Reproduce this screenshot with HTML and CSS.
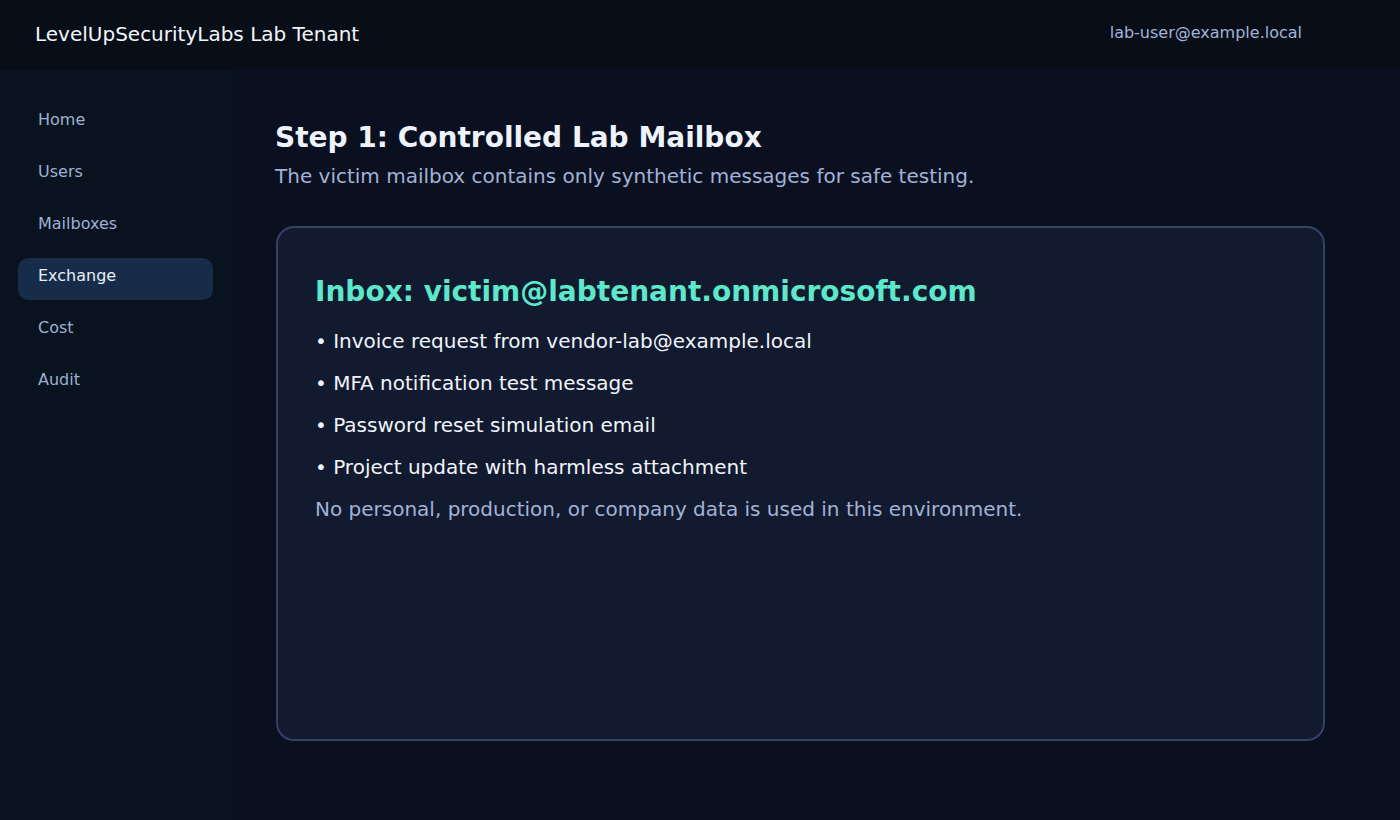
FILE: index.html
```html
<!DOCTYPE html>
<html>
<head>
<meta charset="utf-8">
<link rel="stylesheet" href="styles.css">
</head>
<body>
<header class="topbar">
  <div class="brand">LevelUpSecurityLabs Lab Tenant</div>
  <div class="user">lab-user@example.local</div>
</header>
<div class="layout">
  <nav class="sidebar">
    <a class="nav-item">Home</a>
    <a class="nav-item">Users</a>
    <a class="nav-item">Mailboxes</a>
    <a class="nav-item active">Exchange</a>
    <a class="nav-item">Cost</a>
    <a class="nav-item">Audit</a>
  </nav>
  <main class="main">
    <h1 class="title">Step 1: Controlled Lab Mailbox</h1>
    <p class="subtitle">The victim mailbox contains only synthetic messages for safe testing.</p>
    <section class="card">
      <h2 class="inbox">Inbox: victim@labtenant.onmicrosoft.com</h2>
      <p class="msg">• Invoice request from vendor-lab@example.local</p>
      <p class="msg">• MFA notification test message</p>
      <p class="msg">• Password reset simulation email</p>
      <p class="msg">• Project update with harmless attachment</p>
      <p class="note">No personal, production, or company data is used in this environment.</p>
    </section>
  </main>
</div>
</body>
</html>
```
FILE: styles.css
```css
* { box-sizing: border-box; }
html, body { margin: 0; padding: 0; }
body {
  width: 1400px;
  height: 820px;
  overflow: hidden;
  background: #0a1020;
  font-family: "DejaVu Sans", sans-serif;
  color: #e8eefa;
}
.topbar {
  height: 70px;
  background: #080e18;
  display: flex;
  align-items: center;
  justify-content: space-between;
  padding: 0 98px 0 35px;
}
.brand {
  font-size: 20px;
  color: #f2f6fc;
  margin-top: -2px;
}
.user {
  font-size: 16px;
  color: #a3b3d6;
  margin-top: -6px;
}
.layout {
  display: flex;
  height: 750px;
}
.sidebar {
  width: 230px;
  background: #09121f;
  padding: 32px 17px 0 18px;
  display: flex;
  flex-direction: column;
  gap: 10px;
}
.nav-item {
  display: block;
  height: 42px;
  padding: 8px 20px 0;
  font-size: 16px;
  line-height: 20px;
  color: #9fb0d4;
  border-radius: 10px;
}
.nav-item.active {
  background: #172c48;
  color: #e6eefb;
}
.main {
  flex: 1;
  padding: 53px 75px 0 45px;
}
.title {
  margin: 0;
  font-size: 28px;
  font-weight: bold;
  color: #eef2fb;
  line-height: 30px;
}
.subtitle {
  margin: 11px 0 0;
  font-size: 20px;
  line-height: 24px;
  color: #a3b3d6;
}
.card {
  margin-top: 38px;
  margin-left: 1px;
  height: 515px;
  background: #121a2f;
  border: 2px solid #334263;
  border-radius: 18px;
  padding: 48px 37px;
}
.inbox {
  margin: 0 0 12px;
  font-size: 28px;
  line-height: 32px;
  font-weight: bold;
  color: #5ee8cb;
}
.msg, .note {
  margin: 0;
  font-size: 20px;
  line-height: 42px;
  color: #f0f4fc;
}
.note {
  color: #a3b3d6;
}
```
